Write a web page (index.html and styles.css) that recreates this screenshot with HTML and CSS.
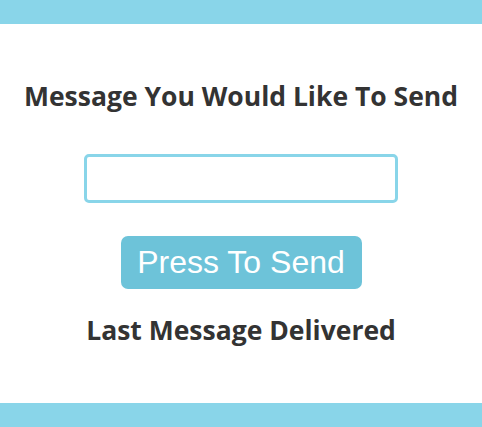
FILE: index.html
```html
<!DOCTYPE html>
<html>
<head>
<meta charset="utf-8">
<link rel="stylesheet" href="styles.css">
</head>
<body>
<div class="page">
  <div class="bar"></div>
  <main class="content">
    <h1 class="title">Message You Would Like To Send</h1>
    <input class="msg-input" type="text">
    <button class="send-btn">Press To Send</button>
    <h2 class="last">Last Message Delivered</h2>
  </main>
  <div class="bar"></div>
</div>
</body>
</html>
```
FILE: styles.css
```css
html, body {
  margin: 0;
  padding: 0;
  background: #fff;
}
.page {
  display: flex;
  flex-direction: column;
  height: 427px;
}
.bar {
  height: 24px;
  background: #89d5e9;
  flex: none;
}
.content {
  flex: 1;
  display: flex;
  flex-direction: column;
  align-items: center;
  padding-top: 55px;
}
.title {
  margin: 0;
  font-family: "Open Sans", sans-serif;
  font-weight: 700;
  font-size: 26.5px;
  line-height: 35px;
  color: #333;
}
.msg-input {
  box-sizing: border-box;
  margin-top: 40px;
  width: 314px;
  height: 49px;
  border: 3px solid #89d5e9;
  border-radius: 5px;
  outline: none;
  background: #fff;
}
.send-btn {
  margin-top: 33px;
  width: 241px;
  height: 53px;
  border: none;
  border-radius: 7px;
  background: #6dc3d9;
  color: #fff;
  font-family: "Liberation Sans", Arial, sans-serif;
  font-size: 32px;
  padding: 0;
}
.last {
  margin: 24px 0 0;
  font-family: "Open Sans", sans-serif;
  font-weight: 700;
  font-size: 26.5px;
  line-height: 35px;
  color: #333;
}
```
